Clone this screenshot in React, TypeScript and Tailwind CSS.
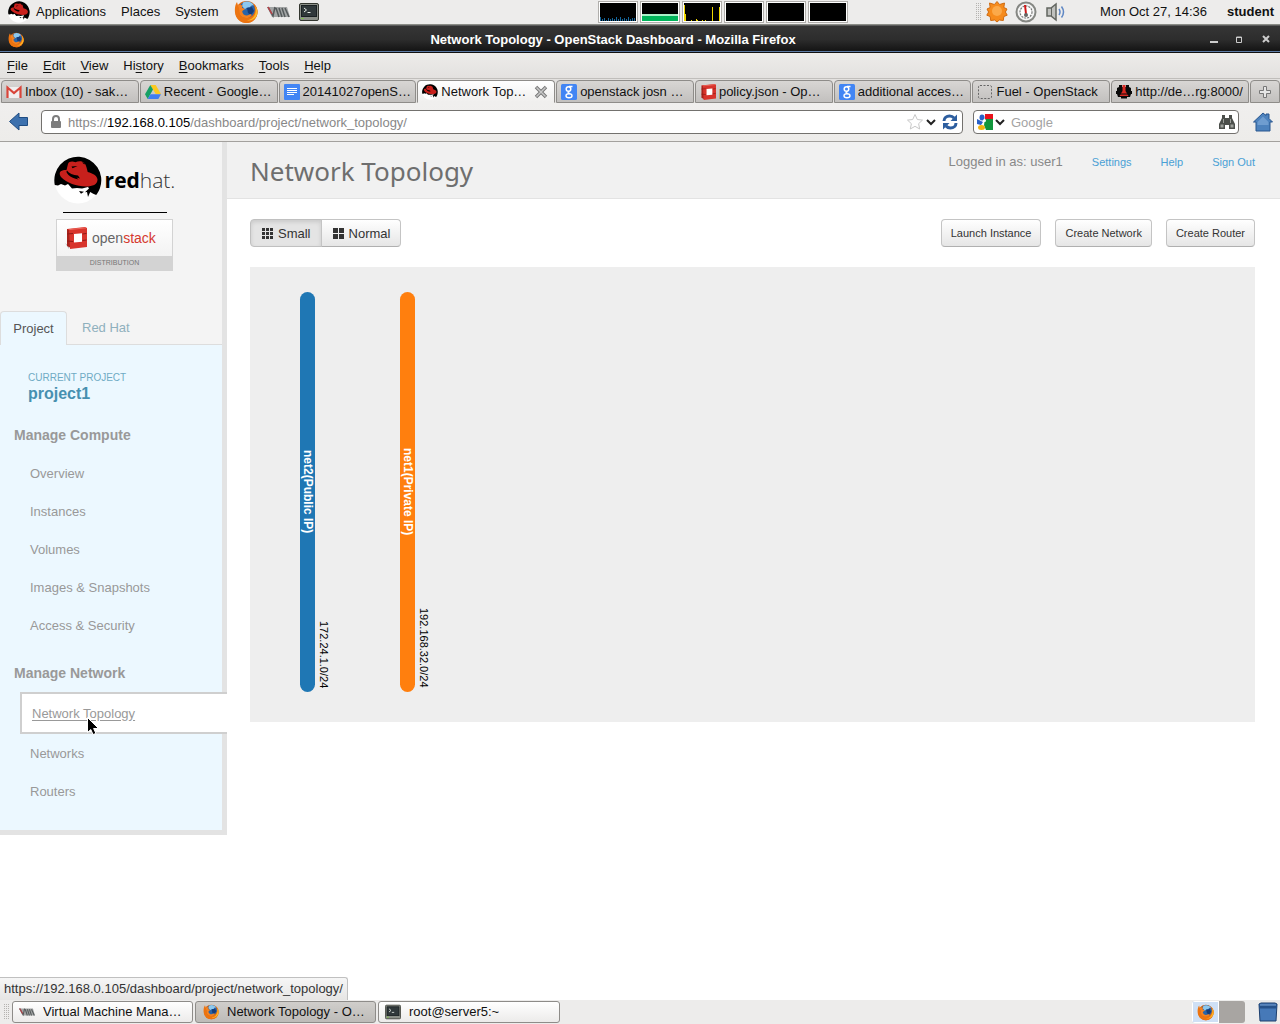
import React from "react";

const FirefoxIcon = ({ className }: { className?: string }) => (
  <svg viewBox="0 0 24 24" className={className} aria-hidden="true">
    <circle cx="12.5" cy="12" r="11" fill="#e2680c" />
    <circle cx="13" cy="9.500" r="8" fill="#2a64a8" />
    <path d="M9 2.500c4-2 9-.5 11 3-2-.8-3.600.2-4 2-2-.5-4 .5-5 2L8 6z" fill="#8cc8ee" />
    <path d="M13 8l5-1 2 4-3 4-3-2z" fill="#163c78" />
    <path
      d="M3 2c.2 1.500.8 2.700 1.800 3.200C6 4.800 8 5 9 5.600c-1 .7-1.300 1.600-.7 2.400l2.500.8c0 1-1.800 1.500-2.600 2.400.2 3.800 4.200 5.300 7 3.600 1.300-.7 2.300-.5 2.600.2-1.600 3-5.800 4-8.800 2.300C4.500 15.500 5 11 5 11z"
      fill="#f58220"
    />
    <path
      d="M3 2C1 5 .6 9 1 12.500 1.600 18.600 6.500 23 12.500 23S23.500 18 23.500 12c0-3.500-1.500-6.500-3.500-8 1.300 3 1.600 6 .8 8.500-1 4-4.300 5.500-8.300 5.500-4.800 0-7.500-3-7-7.500L4.300 7z"
      fill="#ec7410"
    />
    <path d="M21 6c1.500 3.500 1 8.500-2 11.500-2 2-4 2.600-6 2.700 5 1.500 10.500-2.500 10.400-8.200C23.400 9.500 22.500 7.500 21 6z" fill="#fcb826" />
  </svg>
);

const ShadowmanIcon = ({ className }: { className?: string }) => (
  <svg viewBox="0 0 48 48" className={className} aria-hidden="true">
    <circle cx="24" cy="24" r="23.500" fill="#fff" />
    <path
      d="M.8 29A23.500 23.500 0 1 1 46 32c-.8 2.500-2 4.800-3.800 7-2-.8-4-1.600-6-3l-2.200 5-1-5-2 .2 4-3.700-1-1.500-6 1.500-5-.5-5 .5-4-4.500-3 1.500-4-1.500-3 1.500z"
      fill="#000"
    />
    <path
      d="M14 8c1-2.500 4-3 7.500-1.800C24 5 28 4.500 30.500 7c1.500 2 2.500 5.500 3.200 9 5 1.200 9.600 3.800 9.800 7.500 0 5-5 7-11.500 7C23 30.500 12 26.500 7.500 21.500c-2.500-3-2.500-6 1-7 1.500-.6 3-.6 4-.5z"
      fill="#c8201c"
    />
    <path d="M13 14.500c2 3 6 4.500 11 5l2 3-3.500-1 2 2c-4-.5-8-2.500-10-4.500-2-2-2.500-3.500-1.500-4.500zM17.500 10.500l6-.5-5 2.200zM28 6.500l2.500 2 .5-2z" fill="#000" />
    <path d="M25 35l5 .8-3 2z" fill="#000" />
  </svg>
);

const TerminalIcon = ({ className }: { className?: string }) => (
  <svg viewBox="0 0 20 18" className={className} aria-hidden="true">
    <rect x=".5" y=".5" width="19" height="17" rx="1.500" fill="#8b8f88" stroke="#33362f" />
    <rect x="2.500" y="2.500" width="15" height="11" fill="#30383a" stroke="#1a2022" />
    <path d="M5 5l2.500 2L5 9M8.500 9.500h3" stroke="#e8eee8" fill="none" />
    <path d="M2.500 15.500h2" stroke="#76d22c" />
  </svg>
);

const VmmIcon = ({ className }: { className?: string }) => (
  <svg viewBox="0 0 23 12" className={className} aria-hidden="true">
    <path d="M0 1h20l3 10H5z" fill="#a3a5a5" />
    <path d="M1 1l5 9L8 1M9 2l3 9M12 2l3 9M15 2l3 9M18 2l4 9" stroke="#555a5b" strokeWidth="1.500" fill="none" />
    <path d="M1 1l4 7" stroke="#bd3f46" strokeWidth="1.500" />
  </svg>
);

const GmailIcon = () => (
  <svg viewBox="0 0 16 16" className="size-4 shrink-0" aria-hidden="true">
    <rect x="1" y="3" width="14" height="11" fill="#f1efef" />
    <path d="M1.500 14V3.500L8 9l6.500-5.500V14" fill="none" stroke="#d9453a" strokeWidth="2.200" />
  </svg>
);

const DriveIcon = () => (
  <svg viewBox="0 0 16 16" className="size-4 shrink-0" aria-hidden="true">
    <path d="M5.300 1h5.400L16 10h-5.300z" fill="#fbc91f" />
    <path d="M5.300 1L8 5.600 2.700 15 0 10.300z" fill="#16a065" />
    <path d="M5.500 10.300H16L13.300 15H2.700z" fill="#3f7df0" />
  </svg>
);

const DocsIcon = () => (
  <svg viewBox="0 0 16 16" className="size-4 shrink-0" aria-hidden="true">
    <rect width="16" height="16" rx="1" fill="#4285f4" />
    <path d="M3 4.500h10M3 6.500h10M3 8.500h10M3 10.500h7" stroke="#fff" />
  </svg>
);

const GoogleIcon = () => (
  <svg viewBox="0 0 16 16" className="size-4 shrink-0" aria-hidden="true">
    <rect width="16" height="16" rx="1.500" fill="#4285f4" />
    <circle cx="7.500" cy="5" r="2.300" fill="none" stroke="#fff" strokeWidth="1.500" />
    <path d="M8 2.500h3.500M8.500 7.500c-2 .5-2 1.500 0 2" stroke="#fff" strokeWidth="1.300" fill="none" />
    <ellipse cx="8" cy="11.700" rx="3" ry="2" fill="none" stroke="#fff" strokeWidth="1.400" />
  </svg>
);

const OpenStackIcon = ({ className }: { className?: string }) => (
  <svg viewBox="0 0 22 22" className={className} aria-hidden="true">
    <path d="M0 16l4 3v3z" fill="#bbb" />
    <path d="M2 2l4 0v19l-4-2z" fill="#a8221c" />
    <path d="M2 2l18-2 2 1v19l-17 2-1-19z" fill="#d8342c" />
    <path d="M9 7l8-.8v8.600L9 15.500z" fill="#fff" />
    <path d="M2 7l6-.5M2 14l6 .5M17.500 7l4-.6M17.500 13.500l4-.5" stroke="#8f1b16" />
    <path d="M3 2.300l17-1.800 1.500.8L5 3z" fill="#ee6a5f" />
  </svg>
);

const BlankIcon = () => (
  <svg viewBox="0 0 16 16" className="size-4 shrink-0" aria-hidden="true">
    <rect x="1.500" y="1.500" width="13" height="13" rx="1.500" fill="none" stroke="#666" strokeDasharray="2 1.500" />
  </svg>
);

const FuelIcon = () => (
  <svg viewBox="0 0 16 16" className="size-4 shrink-0" aria-hidden="true">
    <path d="M3 1h3v2h4V1h3v2l2 1v3h1v3h-1l-1 3h-3v1.500H5V13H2L1 10H0V7h1V4l2-1z" fill="#0a0a0a" />
    <path d="M6.500 1h3v6l3 5h-9l3-5z" fill="#d92a23" />
    <path d="M4 10h8" stroke="#0a0a0a" />
  </svg>
);

const tabs = [
  { title: "Inbox (10) - sak…", icon: <GmailIcon /> },
  { title: "Recent - Google…", icon: <DriveIcon /> },
  { title: "20141027openS…", icon: <DocsIcon /> },
  { title: "Network Top…", icon: <ShadowmanIcon className="size-4 shrink-0" />, active: true },
  { title: "openstack josn …", icon: <GoogleIcon /> },
  { title: "policy.json - Op…", icon: <OpenStackIcon className="size-4 shrink-0" /> },
  { title: "additional acces…", icon: <GoogleIcon /> },
  { title: "Fuel - OpenStack", icon: <BlankIcon /> },
  { title: "http://de…rg:8000/", icon: <FuelIcon /> },
];

const menus = ["File", "Edit", "View", "History", "Bookmarks", "Tools", "Help"];

const monitors = [
  <path key="cpu" d="M.5 18v-4M2.500 18v-2M4.500 18v-3M6.500 18v-1M8.500 18v-3M10.500 18v-2M12.500 18v-3M14.500 18v-2M16.500 18v-4M18.500 18v-2M20.500 18v-4M22.500 18v-2M24.500 18v-3M26.500 18v-2M28.500 18v-4M30.500 18v-2M32.500 18v-3M34.500 18v-3" stroke="#14669c" />,
  <g key="mem">
    <rect y="11" width="36" height="2" fill="#a8f0c8" />
    <rect y="13" width="36" height="5" fill="#00b45a" />
  </g>,
  <path key="net" d="M.5 18V2M1.500 18v-7M7.500 18v-1M12.500 18v-2M13.500 18v-1M18.500 18v-1M21.500 18v-1M28.500 18V4M35.500 18V4" stroke="#f0d800" />,
  null,
  null,
  null,
];

const TopPanel = () => (
  <header className="flex h-[25px] items-center border-b border-[#8a8c86] bg-[#edeceb] pr-[6px] pl-2">
    <ShadowmanIcon className="size-[22px]" />
    <nav className="ml-[6px] flex gap-[15px]">
      <button>Applications</button>
      <button>Places</button>
      <button>System</button>
    </nav>
    <div className="ml-4 flex items-center gap-[9px]">
      <button aria-label="Firefox">
        <FirefoxIcon className="size-6" />
      </button>
      <button aria-label="Virtual Machine Manager">
        <VmmIcon className="h-3 w-[23px]" />
      </button>
      <button aria-label="Terminal">
        <TerminalIcon className="h-[18px] w-5" />
      </button>
    </div>
    <div className="mr-[128px] ml-auto flex gap-[2px]">
      {monitors.map((graph, i) => (
        <div key={i} className="border border-[#b0aeab] bg-white p-px">
          <svg viewBox="0 0 36 18" className="h-[18px] w-9 bg-black" aria-hidden="true">
            {graph}
          </svg>
        </div>
      ))}
    </div>
    <div className="flex items-center">
      <svg viewBox="0 0 6 18" className="h-[18px] w-[6px]" aria-hidden="true">
        <path d="M.5 0v18M2.500 0v18M4.500 0v18" stroke="#b5b3b0" strokeDasharray="1 1" />
      </svg>
      <svg viewBox="0 0 24 24" className="ml-[3px] size-6" aria-hidden="true">
        <path
          d="M12 1.500l2.600 3 4.900-1.500-.7 4.500 3.200 1.500-1.600 3 1.800 3.200-3.400 1.300-.5 4-4-.5L12 22l-2.300-2-4 .5-.5-4-3.400-1.300L3.600 12 2 9l3.200-1.500L4.500 3l4.900 1.500z"
          fill="#f68b1c"
          stroke="#cf6a10"
        />
        <circle cx="12" cy="11" r="5" fill="#fba94a" />
      </svg>
      <svg viewBox="0 0 24 24" className="ml-[5px] size-6" aria-hidden="true">
        <circle cx="12" cy="12" r="9.500" fill="#f4f4f4" stroke="#858783" strokeWidth="2" />
        <circle cx="12" cy="12" r="6" fill="#fff" stroke="#777" strokeWidth="1.200" strokeDasharray="2 1" />
        <path d="M11 5l1 9" stroke="#d01818" strokeWidth="2" />
        <circle cx="12" cy="15" r="2" fill="#666" />
      </svg>
      <svg viewBox="0 0 20 20" className="ml-2 size-5" aria-hidden="true">
        <path d="M1 6h4l5-4v16l-5-4H1z" fill="#c0c1be" stroke="#626560" strokeWidth="1.500" />
        <path d="M5.500 6v8" stroke="#626560" />
        <path d="M13 7q2 3 0 6M15.500 4.500q4 5.500 0 11" fill="none" stroke="#5f87c4" strokeWidth="1.500" />
      </svg>
      <time className="ml-[34px]">Mon Oct 27, 14:36</time>
      <span className="ml-5 font-bold">student</span>
    </div>
  </header>
);

const TitleBar = () => (
  <div className="flex h-7 items-center border-t border-[#5c5c5c] bg-linear-to-b from-[#353535] via-[#2d2d2d] to-[#101010] px-2 shadow-[inset_0_-1px_0_#111,inset_0_-2px_0_#5d7ca6]">
    <FirefoxIcon className="size-4" />
    <p className="flex-1 pr-2 text-center font-bold text-white">
      Network Topology - OpenStack Dashboard - Mozilla Firefox
    </p>
    <svg viewBox="0 0 62 12" className="h-3 w-[62px]" aria-hidden="true">
      <path d="M0 8h8" stroke="#ccc" strokeWidth="2" />
      <path d="M26.500 3v5.500h5V3zM26 3.500h6" fill="none" stroke="#ccc" />
      <path d="M53 2l6 6M59 2l-6 6" stroke="#ccc" strokeWidth="2" />
    </svg>
  </div>
);

const MenuBar = () => (
  <nav className="flex h-[25px] items-center gap-[15px] bg-linear-to-b from-[#edecea] to-[#e3e1df] px-[7px]">
    {menus.map((menu) => {
      const at = menu === "History" ? 2 : 0;
      return (
        <button key={menu}>
          {menu.slice(0, at)}
          <span className="underline underline-offset-2">{menu[at]}</span>
          {menu.slice(at + 1)}
        </button>
      );
    })}
  </nav>
);

const TabStrip = () => (
  <div className="flex h-[25px] border-t border-[#c0bebb] bg-[#e3e1df]">
    {tabs.map(({ title, icon, active }) => (
      <button
        key={title}
        className={`mt-px ml-px flex min-w-0 flex-1 items-center gap-[3px] rounded-t-[4px] border border-[#8e8c89] pl-1 ${
          active
            ? "border-b-[#f0efee] bg-linear-to-b from-white to-[#f0efee]"
            : "bg-linear-to-b from-[#d8d6d4] to-[#c2c0be]"
        }`}
      >
        {icon}
        <span className="truncate">{title}</span>
        {active && (
          <svg viewBox="0 0 14 14" className="mr-[6px] ml-auto size-[14px] shrink-0" aria-hidden="true">
            <path d="M2 2l10 10M12 2L2 12" stroke="#777" strokeWidth="3.500" />
            <path d="M2.500 2.500l9 9M11.500 2.500l-9 9" stroke="#c9c9c9" strokeWidth="1.500" />
          </svg>
        )}
      </button>
    ))}
    <button
      aria-label="New tab"
      className="mt-px ml-px flex w-[30px] items-center justify-center rounded-t-[4px] border border-[#8e8c89] bg-linear-to-b from-[#d8d6d4] to-[#c2c0be]"
    >
      <svg viewBox="0 0 14 14" className="size-[14px]" aria-hidden="true">
        <path d="M5.500 1.500h3v4h4v3h-4v4h-3v-4h-4v-3h4z" fill="#e6e6e6" stroke="#777" />
      </svg>
    </button>
  </div>
);

const Chevron = () => (
  <svg viewBox="0 0 10 8" className="h-2 w-[10px]" aria-hidden="true">
    <path d="M1 2l4 4 4-4" fill="none" stroke="#222" strokeWidth="2" />
  </svg>
);

const NavBar = () => (
  <div className="flex h-[39px] items-center border-b border-[#a3a19e] bg-linear-to-b from-[#f0efee] to-[#edecea] pr-[7px] pl-2">
    <button aria-label="Back">
      <svg viewBox="0 0 22 20" className="h-5 w-[22px]" aria-hidden="true">
        <path d="M1.500 9.500L11 1v4.500h8.500v8H11V18z" fill="#3d71ae" stroke="#1f4c82" />
      </svg>
    </button>
    <div className="ml-[11px] flex h-6 flex-1 items-center rounded-[4px] border border-[#73716e] bg-white pr-1 pl-2">
      <svg viewBox="0 0 12 14" className="h-[14px] w-3" aria-hidden="true">
        <rect x="1" y="6" width="10" height="7" rx="1" fill="#7d7d7d" />
        <path d="M3 6V4a3 3 0 0 1 6 0v2" fill="none" stroke="#7d7d7d" strokeWidth="2" />
      </svg>
      <a href="#topology" className="ml-[6px] flex-1 pt-px text-[#888]">
        https://<span className="text-black">192.168.0.105</span>/dashboard/project/network_topology/
      </a>
      <svg viewBox="0 0 18 18" className="size-[18px]" aria-hidden="true">
        <path d="M9 1.500l2.300 5 5.200.6-3.900 3.600 1.100 5.300L9 13.300 4.300 16l1.100-5.300L1.500 7.100l5.200-.6z" fill="#fff" stroke="#c8c8c8" />
      </svg>
      <button aria-label="History" className="ml-[2px]">
        <Chevron />
      </button>
      <button aria-label="Reload" className="ml-[6px]">
        <svg viewBox="0 0 16 16" className="size-4" aria-hidden="true">
          <path d="M2 7c0-3 2.500-5 5.500-5 2 0 3.500.8 4.500 2" fill="none" stroke="#2d5e9f" strokeWidth="3" />
          <path d="M15 .5V7H8.500z" fill="#2d5e9f" />
          <path d="M14 9c0 3-2.500 5-5.500 5-2 0-3.500-.8-4.500-2" fill="none" stroke="#2d5e9f" strokeWidth="3" />
          <path d="M1 15.500V9h6.500z" fill="#2d5e9f" />
        </svg>
      </button>
    </div>
    <div className="ml-[10px] flex h-6 w-[266px] items-center rounded-[4px] border border-[#73716e] bg-white px-[3px]">
      <svg viewBox="0 0 16 16" className="size-4" aria-hidden="true">
        <path d="M8 0h8v5H8z" fill="#e8121c" />
        <path d="M8 5h8v11H9l-2-5z" fill="#11963c" />
        <ellipse cx="5" cy="3.500" rx="2.500" ry="3" fill="#2b62c9" />
        <path d="M0 5l6 3-2 3-4-1z" fill="#2b62c9" />
        <ellipse cx="4.500" cy="13.500" rx="3.500" ry="2.500" fill="#f2b50f" />
        <circle cx="7.500" cy="6.500" r="1.500" fill="#fff" />
      </svg>
      <span className="ml-[2px] flex">
        <Chevron />
      </span>
      <input
        aria-label="Search"
        placeholder="Google"
        className="ml-[6px] min-w-0 flex-1 pt-px outline-none placeholder:text-[#a3a3a3]"
      />
      <button aria-label="Find">
        <svg viewBox="0 0 16 16" className="size-4" aria-hidden="true">
          <path d="M3 1h3v3h4V1h3v3l3 6v5h-6v-4H6v4H0v-5l3-6z" fill="#4c4f4b" />
          <path d="M1.500 10.500h3v3h-3zM11.500 10.500h3v3h-3z" fill="#9ea19c" />
          <path d="M4.500 5v4M11.500 5v4" stroke="#9ea19c" />
        </svg>
      </button>
    </div>
    <button aria-label="Home" className="ml-[14px]">
      <svg viewBox="0 0 20 20" className="size-5" aria-hidden="true">
        <path d="M3 10v9h14v-9h2.500L16 6.500V2h-3v1.500L10 1 .5 10z" fill="#4d82bd" stroke="#28568f" />
        <path d="M4.500 10L10 4.500 15.500 10v3h-11z" fill="#6f9dd0" />
      </svg>
    </button>
  </div>
);

const NavItem = ({ label }: { label: string }) => (
  <li className="flex h-[38px] items-center pl-[30px]">
    <a href="#panel">{label}</a>
  </li>
);

const Sidebar = () => (
  <aside className="w-[227px] shrink-0 border-r-[5px] border-b-[5px] border-[#e3e3e3] bg-[#f4f4f4]">
    <div className="flex h-[169px] flex-col items-center pt-[14px] pl-[7px]">
      <div className="flex items-center">
        <ShadowmanIcon className="size-12" />
        <span className="ml-[3px] font-['Open_Sans',sans-serif] text-[21px] leading-6 font-light text-[#333]">
          <b className="font-bold text-black">red</b>hat.
        </span>
      </div>
      <div className="mt-2 h-px w-[104px] bg-black" />
      <div className="mt-[6px] w-[117px] border border-[#d3d3d3] bg-linear-to-b from-white to-[#eeeeee]">
        <div className="flex h-9 items-center gap-[5px] pl-2">
          <OpenStackIcon className="size-[22px]" />
          <span className="font-['Liberation_Sans_Narrow','Liberation_Sans',sans-serif] text-sm text-[#666]">
            open<span className="text-[#d5392f]">stack</span>
          </span>
        </div>
        <p className="bg-[#d3d3d3] text-center text-[7px] leading-[14px] text-[#777]">DISTRIBUTION</p>
      </div>
    </div>
    <div className="flex h-[34px] border-b border-[#dddddd]">
      <a
        href="#project"
        className="-mb-px flex w-[67px] items-center justify-center rounded-t-[4px] border border-b-0 border-[#dddddd] bg-[#ecf8ff] text-[#555]"
      >
        Project
      </a>
      <a href="#redhat" className="flex items-center px-[15px] pt-px text-[#8fb0bd]">
        Red Hat
      </a>
    </div>
    <div className="bg-[#ecf8ff] pt-[27px] pb-[19px] text-[#999]">
      <div className="pl-7">
        <h4 className="text-[10px] leading-3 text-[#6fabc4]">CURRENT PROJECT</h4>
        <h3 className="text-base leading-5 font-bold text-[#4790b0]">project1</h3>
      </div>
      <h4 className="mt-[21px] pl-[14px] text-sm leading-5 font-bold">Manage Compute</h4>
      <ul className="mt-[10px]">
        <NavItem label="Overview" />
        <NavItem label="Instances" />
        <NavItem label="Volumes" />
        <NavItem label="Images & Snapshots" />
        <NavItem label="Access & Security" />
      </ul>
      <h4 className="mt-[18px] pl-[14px] text-sm leading-5 font-bold">Manage Network</h4>
      <ul className="mt-[9px]">
        <li className="relative -mr-[5px] mb-px ml-5 flex h-[42px] items-center border-2 border-r-0 border-[#cfcfcf] bg-white pt-px pl-[10px]">
          <a href="#topology" className="underline underline-offset-2">
            Network Topology
          </a>
          <svg viewBox="0 0 12 18" className="absolute top-[23px] left-[65px] h-[18px] w-3" aria-hidden="true">
            <path d="M.5.500v15l3.300-3 2.200 5 3-1-2.400-5h4.900z" fill="#000" stroke="#fff" />
          </svg>
        </li>
        <NavItem label="Networks" />
        <NavItem label="Routers" />
      </ul>
    </div>
  </aside>
);

const ActionButton = ({ label }: { label: string }) => (
  <button className="h-7 rounded-[4px] border border-[#c4c4c4] border-b-[#b0b0b0] bg-linear-to-b from-white to-[#e6e6e6] px-[9px] text-[11px] text-[#333]">
    {label}
  </button>
);

const Network = ({ name, cidr, color }: { name: string; cidr: string; color: string }) => (
  <div className="flex h-[400px] w-[100px]">
    <div
      className={`flex w-[15px] items-center justify-center rounded-full text-xs leading-[15px] font-bold text-white [writing-mode:vertical-rl] ${color}`}
    >
      {name}
    </div>
    <div className="flex w-[17px] justify-end pb-1 text-[11px] leading-4 text-black [writing-mode:vertical-rl]">
      <span>{cidr}</span>
    </div>
  </div>
);

const Dashboard = () => (
  <main className="min-w-0 flex-1">
    <div className="flex h-[57px] justify-between border-b border-[#e3e3e3] bg-[#f1f1f1] pr-[25px] pl-[23px]">
      <h1 className="pt-[9px] font-['Noto_Sans',sans-serif] text-[26px] leading-10 text-[#6e6e6e]">
        Network Topology
      </h1>
      <div className="flex h-10 items-center gap-[29px] text-[11px] text-[#49a0d5]">
        <span className="text-[13px] text-[#888]">Logged in as: user1</span>
        <a href="#settings">Settings</a>
        <a href="#help">Help</a>
        <a href="#signout">Sign Out</a>
      </div>
    </div>
    <div className="pt-5 pr-[25px] pl-[23px]">
      <div className="flex items-center justify-between">
        <div className="flex text-[#333]">
          <button className="flex h-7 items-center gap-[5px] rounded-l-[4px] border border-[#c0c0c0] bg-[#e4e4e4] px-[11px] pr-[10px] shadow-[inset_0_2px_4px_rgba(0,0,0,0.12)]">
            <svg viewBox="0 0 11 11" className="size-[11px]" aria-hidden="true">
              <path d="M0 0h3v3H0zM4 0h3v3H4zM8 0h3v3H8zM0 4h3v3H0zM4 4h3v3H4zM8 4h3v3H8zM0 8h3v3H0zM4 8h3v3H4zM8 8h3v3H8z" fill="#333" />
            </svg>
            <span className="pt-px">Small</span>
          </button>
          <button className="-ml-px flex h-7 items-center gap-[5px] rounded-r-[4px] border border-[#c4c4c4] border-b-[#b0b0b0] bg-linear-to-b from-white to-[#e6e6e6] px-[11px] pr-[10px]">
            <svg viewBox="0 0 11 11" className="size-[11px]" aria-hidden="true">
              <path d="M0 0h5v5H0zM6 0h5v5H6zM0 6h5v5H0zM6 6h5v5H6z" fill="#333" />
            </svg>
            <span className="pt-px">Normal</span>
          </button>
        </div>
        <div className="flex gap-[14px]">
          <ActionButton label="Launch Instance" />
          <ActionButton label="Create Network" />
          <ActionButton label="Create Router" />
        </div>
      </div>
      <div className="mt-5 flex bg-[#eeeeee] pt-[25px] pb-[30px] pl-[50px]">
        <Network name="net2(Public IP)" cidr="172.24.1.0/24" color="bg-[#1f77b4]" />
        <Network name="net1(Private IP)" cidr="192.168.32.0/24" color="bg-[#ff7f0e]" />
      </div>
    </div>
  </main>
);

const Taskbar = () => (
  <footer className="flex h-6 items-center bg-[#edeceb] pr-[2px] pl-1">
    <svg viewBox="0 0 6 16" className="h-4 w-[6px]" aria-hidden="true">
      <path d="M.5 0v16M2.500 0v16M4.500 0v16" stroke="#b5b3b0" strokeDasharray="1 1" />
    </svg>
    <div className="ml-[2px] flex gap-[2px]">
      <button className="flex h-[22px] w-[181px] items-center rounded-[3px] border border-[#8e8c89] bg-linear-to-b from-white to-[#ecebea] pl-[6px]">
        <VmmIcon className="h-[10px] w-4" />
        <span className="ml-2 truncate">Virtual Machine Mana…</span>
      </button>
      <button className="flex h-[22px] w-[181px] items-center rounded-[3px] border border-[#8e8c89] bg-linear-to-b from-[#d0cecb] to-[#bdbbb8] pl-[7px]">
        <FirefoxIcon className="size-4" />
        <span className="ml-2 truncate">Network Topology - O…</span>
      </button>
      <button className="flex h-[22px] w-[182px] items-center rounded-[3px] border border-[#8e8c89] bg-linear-to-b from-white to-[#ecebea] pl-[6px]">
        <TerminalIcon className="size-4" />
        <span className="ml-2 truncate">root@server5:~</span>
      </button>
    </div>
    <div className="ml-auto flex h-[22px] w-[53px] overflow-hidden rounded-[3px] bg-[#a8a5a2]">
      <div className="flex w-[27px] items-center justify-center border border-white bg-[#cfe0f5]">
        <FirefoxIcon className="size-[17px]" />
      </div>
    </div>
    <button aria-label="Trash" className="ml-[13px]">
      <svg viewBox="0 0 20 20" className="size-5" aria-hidden="true">
        <path d="M1 2l2-1h14l2 1-1 17H2z" fill="#4679b8" stroke="#1d3f6d" />
        <path d="M1 2.500h18v4H1z" fill="#27528a" />
        <path d="M2 3h16" stroke="#7da6d8" />
      </svg>
    </button>
  </footer>
);

const App = () => {
  return (
    <div className="flex min-h-screen flex-col bg-white font-['Liberation_Sans',Arial,sans-serif] text-[13px] leading-4 text-[#111]">
      <TopPanel />
      <TitleBar />
      <MenuBar />
      <TabStrip />
      <NavBar />
      <div className="relative flex flex-1 items-start">
        <Sidebar />
        <Dashboard />
        <div className="absolute bottom-0 left-0 rounded-tr-[3px] border-t border-r border-[#c0c0c0] bg-linear-to-b from-[#f6f6f6] to-[#e6e5e4] px-1 py-[3px] text-[#333]">
          https://192.168.0.105/dashboard/project/network_topology/
        </div>
      </div>
      <Taskbar />
    </div>
  );
};

export default App;
